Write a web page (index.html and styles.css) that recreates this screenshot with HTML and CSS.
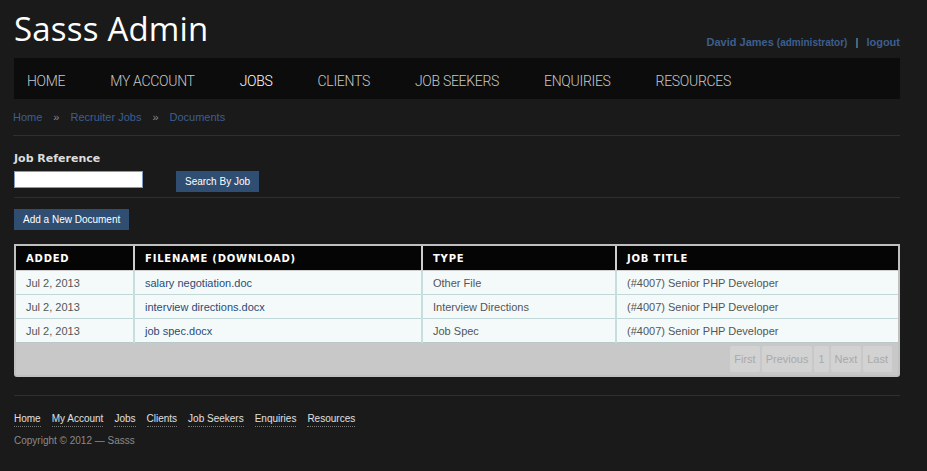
FILE: index.html
```html
<!DOCTYPE html>
<html>
<head>
<meta charset="utf-8">
<title>Sasss Admin</title>
<link rel="stylesheet" href="styles.css">
</head>
<body>
<div class="page">
  <header class="top">
    <h1 class="brand">Sasss Admin</h1>
    <div class="user">
      <a href="#" class="uname">David James <span class="role">(administrator)</span></a>
      <span class="pipe">|</span>
      <a href="#" class="logout">logout</a>
    </div>
  </header>
  <nav class="nav">
    <a href="#">HOME</a>
    <a href="#">MY ACCOUNT</a>
    <a href="#" class="active">JOBS</a>
    <a href="#">CLIENTS</a>
    <a href="#">JOB SEEKERS</a>
    <a href="#">ENQUIRIES</a>
    <a href="#">RESOURCES</a>
  </nav>
  <div class="crumbs">
    <a href="#">Home</a><span class="sep">&raquo;</span><a href="#">Recruiter Jobs</a><span class="sep">&raquo;</span><a href="#">Documents</a>
  </div>
  <form class="search">
    <label class="lbl">Job Reference</label>
    <div class="row">
      <input type="text" class="field">
      <button type="button" class="btn">Search By Job</button>
    </div>
  </form>
  <div class="actions">
    <button type="button" class="btn">Add a New Document</button>
  </div>
  <div class="grid">
    <table>
      <colgroup>
        <col class="c1"><col class="c2"><col class="c3"><col class="c4">
      </colgroup>
      <thead>
        <tr><th>Added</th><th>Filename (download)</th><th>Type</th><th>Job Title</th></tr>
      </thead>
      <tbody>
        <tr><td>Jul 2, 2013</td><td><a href="#">salary negotiation.doc</a></td><td>Other File</td><td>(#4007) Senior PHP Developer</td></tr>
        <tr><td>Jul 2, 2013</td><td><a href="#">interview directions.docx</a></td><td>Interview Directions</td><td>(#4007) Senior PHP Developer</td></tr>
        <tr><td>Jul 2, 2013</td><td><a href="#">job spec.docx</a></td><td>Job Spec</td><td>(#4007) Senior PHP Developer</td></tr>
      </tbody>
    </table>
    <div class="pager">
      <span>First</span><span>Previous</span><span>1</span><span>Next</span><span>Last</span>
    </div>
  </div>
  <footer class="foot">
    <div class="flinks">
      <a href="#">Home</a><a href="#">My Account</a><a href="#">Jobs</a><a href="#">Clients</a><a href="#">Job Seekers</a><a href="#">Enquiries</a><a href="#">Resources</a>
    </div>
    <div class="copy">Copyright &copy; 2012 &mdash; Sasss</div>
  </footer>
</div>
</body>
</html>
```
FILE: styles.css
```css
html, body {
  margin: 0;
  padding: 0;
  background: #1a1a1a;
  font-family: "Liberation Sans", Arial, sans-serif;
  font-size: 11px;
  color: #ccc;
}
a { text-decoration: none; }

.page {
  width: 886px;
  margin-left: 14px;
}

.top {
  height: 58px;
  display: flex;
  justify-content: space-between;
  align-items: flex-end;
}
.brand {
  margin: 0;
  padding-bottom: 9px;
  font-family: "Open Sans", sans-serif;
  font-weight: 400;
  font-size: 33px;
  line-height: 40px;
  color: #fff;
  letter-spacing: 0.2px;
}
.user {
  padding-bottom: 8px;
  font-size: 11px;
  line-height: 14px;
  font-weight: bold;
  white-space: nowrap;
}
.user a { color: #3d5f8e; }
.role { font-size: 10px; }
.pipe { color: #aaa; font-weight: normal; margin: 0 5px; }

.nav {
  height: 41px;
  background: #0c0c0c;
  display: flex;
  align-items: flex-start;
  gap: 45px;
  padding-left: 13px;
}
.nav a {
  font-family: Roboto, sans-serif;
  font-weight: 300;
  font-size: 14px;
  letter-spacing: -0.3px;
  color: #c8c8c8;
  line-height: 35px;
  padding-top: 6px;
}
.nav a.active { color: #fff; }

.crumbs {
  height: 36px;
  line-height: 37px;
  border-bottom: 1px solid #2f2f2f;
  margin-left: -1px;
}
.crumbs a { color: #3d5f8e; }
.crumbs .sep { color: #888; margin: 0 11px; }

.search {
  margin: 0;
  padding: 15px 0 5px;
  border-bottom: 1px solid #2f2f2f;
}
.lbl {
  display: block;
  font-family: "DejaVu Sans", sans-serif;
  font-weight: bold;
  font-size: 11px;
  line-height: 16px;
  color: #ddd;
}
.row {
  display: flex;
  align-items: flex-start;
  gap: 33px;
  margin-top: 4px;
}
.field {
  width: 129px;
  height: 17px;
  box-sizing: border-box;
  border: 1px solid #7e9cc0;
  background: #fff;
  padding: 0 3px;
  margin: 0;
}
.btn {
  height: 21px;
  padding: 0 9px;
  background: #2f4e72;
  color: #fff;
  border: 0;
  font-family: "Liberation Sans", Arial, sans-serif;
  font-size: 10px;
  line-height: 21px;
  cursor: pointer;
}

.actions {
  padding-top: 11px;
  padding-bottom: 14px;
}

.grid {
  border: 2px solid #c0c0c0;
  border-radius: 0 0 3px 3px;
  background: #c8c8c8;
}
table {
  width: 100%;
  border-collapse: collapse;
  table-layout: fixed;
}
col.c1 { width: 118px; }
col.c2 { width: 288px; }
col.c3 { width: 194px; }
th {
  background: #050505;
  color: #fff;
  text-align: left;
  text-transform: uppercase;
  font-family: "DejaVu Sans", sans-serif;
  font-size: 10px;
  letter-spacing: 0.8px;
  font-weight: bold;
  height: 24px;
  padding: 0 10px;
  border-left: 2px solid #cfcfcf;
  border-bottom: 1px solid #cfcfcf;
}
th:first-child { border-left: 0; }
td {
  background: #f4fafa;
  color: #555;
  height: 23px;
  padding: 0 10px;
  border-left: 2px solid #c8dede;
  border-bottom: 1px solid #c2d8d8;
  white-space: nowrap;
}
td:first-child { border-left: 0; }
td a { color: #2a4b77; }
tbody tr:last-child td { border-bottom: 1px solid #b9c9c9; }

.pager {
  height: 32px;
  display: flex;
  justify-content: flex-end;
  align-items: center;
  gap: 2px;
  padding-right: 6px;
}
.pager span {
  height: 26px;
  line-height: 26px;
  padding: 0 4px;
  background: #d2d2d2;
  color: #a9a9a9;
  font-size: 11px;
  border-radius: 2px;
}

.foot {
  margin-top: 18px;
  border-top: 1px solid #2f2f2f;
  padding-top: 16px;
}
.flinks {
  display: flex;
  gap: 11px;
  line-height: 16px;
}
.flinks a {
  color: #e0e0e0;
  border-bottom: 1px dotted #777;
  line-height: 14px;
  font-size: 10px;
}
.copy {
  margin-top: 6px;
  line-height: 16px;
  color: #8a8a8a;
  font-size: 10px;
}
```
